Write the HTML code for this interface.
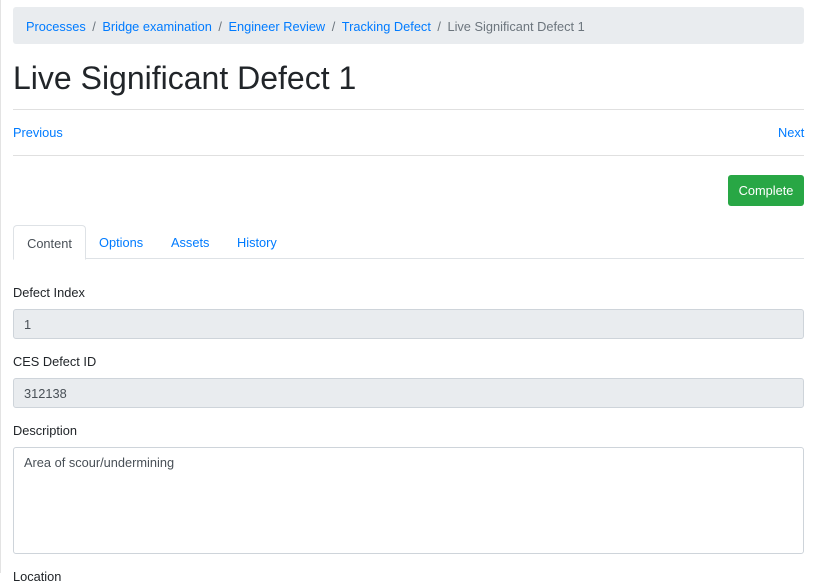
<html><head><style>
body{margin:0;font-family:"Liberation Sans",sans-serif;font-size:12.8px;color:#212529;background:#fff;width:818px;height:573px;overflow:hidden;position:relative}
.vl{position:absolute;left:0;top:0;width:1px;height:573px;background:#e3e3e3}
a{color:#007bff;text-decoration:none}
.bc{position:absolute;left:13px;top:7px;width:791px;height:37px;background:#e9ecef;border-radius:3px;box-sizing:border-box;padding:12px 13px;line-height:15px}
.bc .s{color:#6c757d;padding:0 6.5px}
h1{position:absolute;left:13px;top:59px;margin:0;font-weight:400;font-size:32px;line-height:38px}
.hr{position:absolute;left:13px;width:791px;height:1px;background:#e0e0e0}
.btn{position:absolute;left:728px;top:175px;width:76px;height:31px;background:#28a745;color:#fff;border-radius:3px;text-align:center;line-height:31px}
.tabs{position:absolute;left:13px;top:225px;width:791px;height:33px;border-bottom:1px solid #dee2e6}
.tab{position:absolute;top:0;height:33px;line-height:35px;color:#007bff}
.tab.a{left:0;width:71px;border:1px solid #dee2e6;border-bottom:1px solid #fff;border-radius:4px 4px 0 0;color:#495057;text-align:center;background:#fff;height:33px}
.lbl{position:absolute;left:13px}
.in{position:absolute;left:13px;width:791px;height:30px;box-sizing:border-box;border:1px solid #ced4da;border-radius:3px;background:#e9ecef;color:#495057;padding:0 10px;line-height:29px}
</style></head><body>
<div class="vl"></div>
<div class="bc"><a>Processes</a><span class="s">/</span><a>Bridge examination</a><span class="s">/</span><a>Engineer Review</a><span class="s">/</span><a>Tracking Defect</a><span class="s">/</span><span style="color:#6c757d">Live Significant Defect 1</span></div>
<h1>Live Significant Defect 1</h1>
<div class="hr" style="top:109px"></div>
<a style="position:absolute;left:13px;top:125px">Previous</a>
<a style="position:absolute;left:778px;top:125px">Next</a>
<div class="hr" style="top:155px"></div>
<div class="btn">Complete</div>
<div class="tabs">
<div class="tab a">Content</div>
<div class="tab" style="left:86px">Options</div>
<div class="tab" style="left:158px">Assets</div>
<div class="tab" style="left:224px">History</div>
</div>
<div class="lbl" style="top:285px">Defect Index</div>
<div class="in" style="top:309px">1</div>
<div class="lbl" style="top:354px">CES Defect ID</div>
<div class="in" style="top:378px">312138</div>
<div class="lbl" style="top:423px">Description</div>
<div class="in" style="top:447px;height:107px;background:#fff;line-height:15px;padding-top:7px">Area of scour/undermining</div>
<div class="lbl" style="top:569px">Location</div>
</body></html>
